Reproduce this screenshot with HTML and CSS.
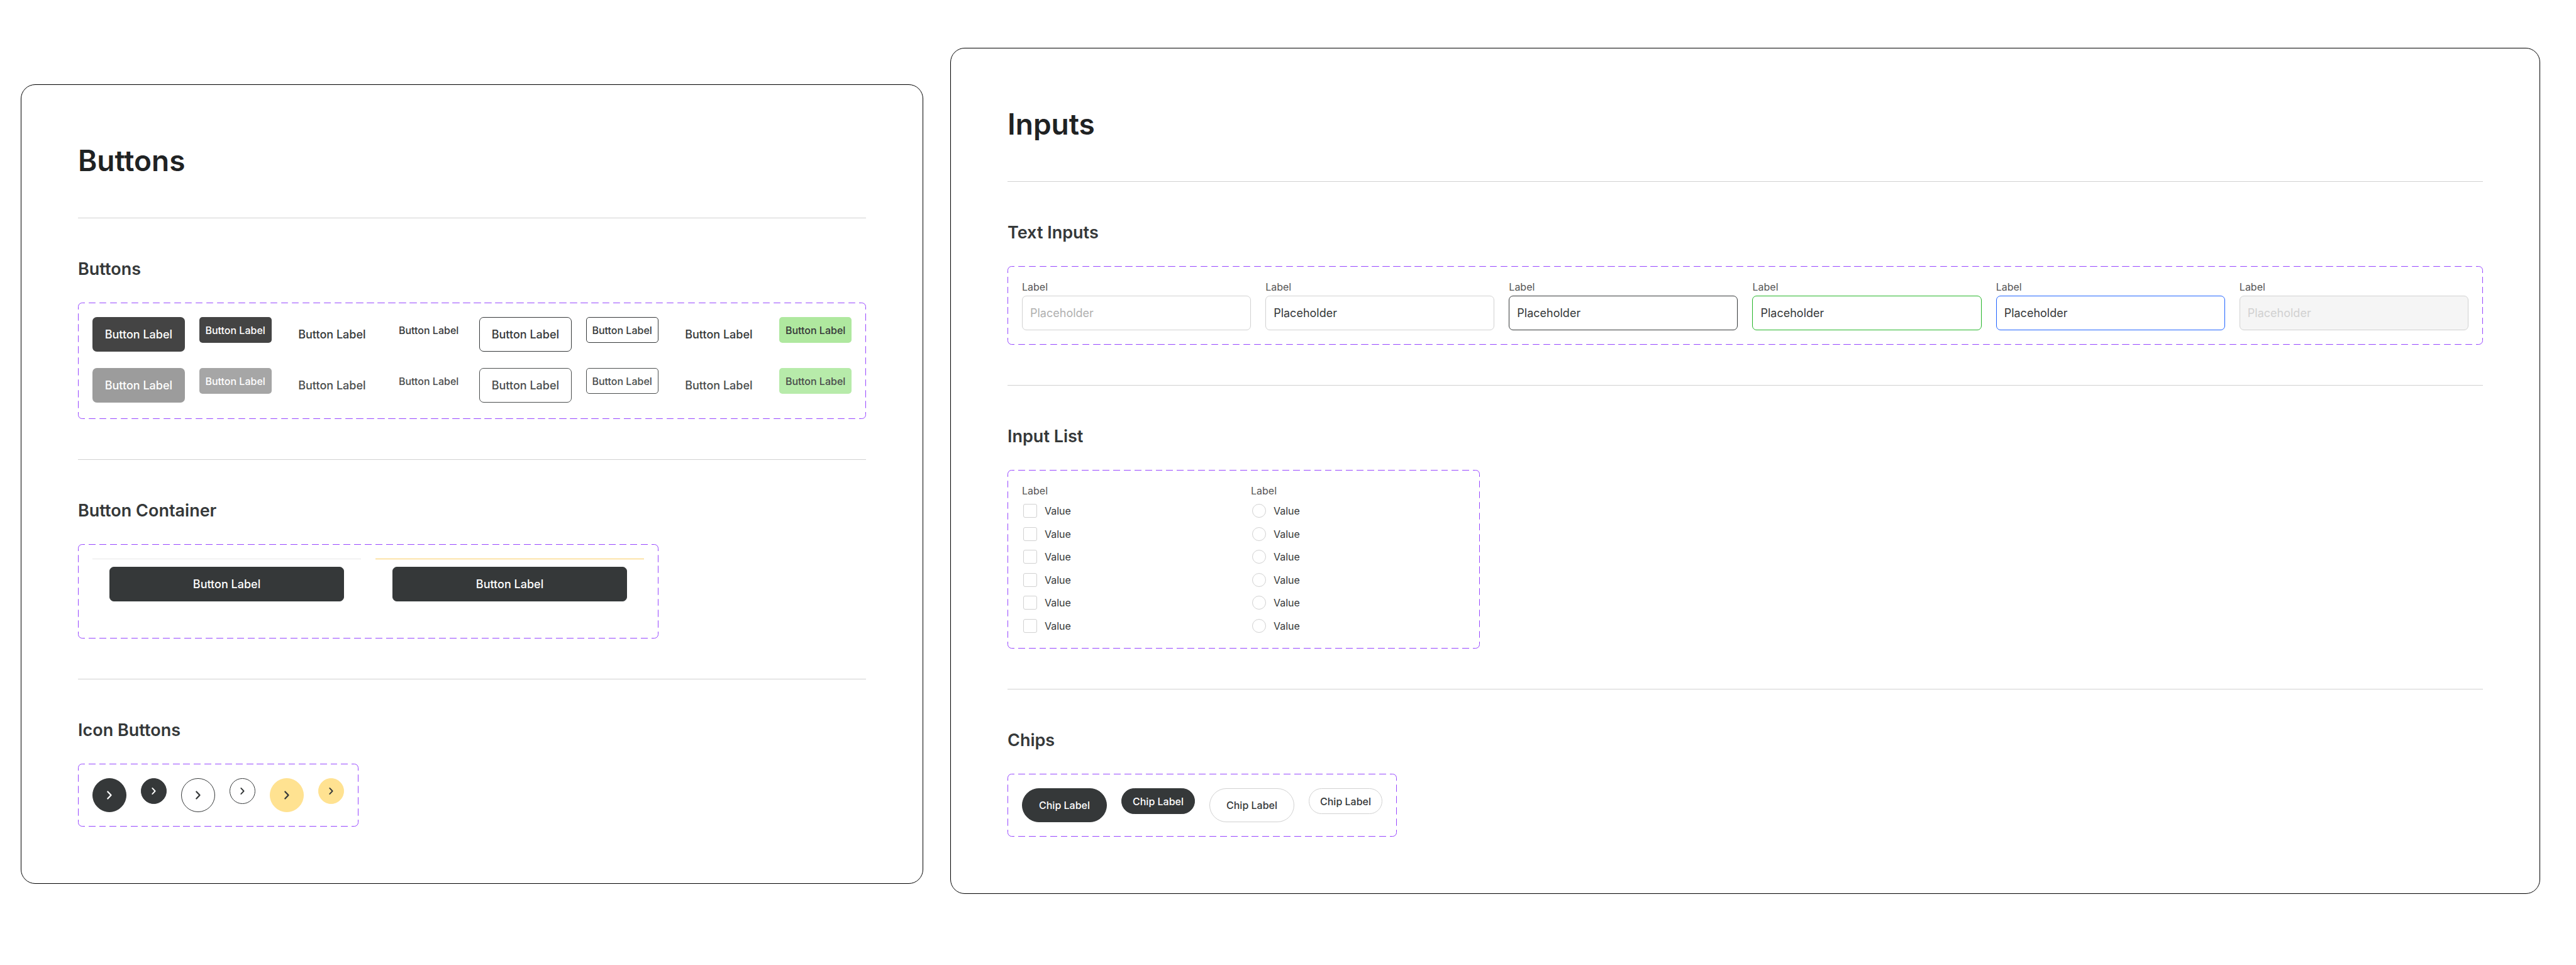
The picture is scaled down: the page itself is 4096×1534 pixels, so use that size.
FILE: index.html
```html
<!DOCTYPE html>
<html lang="en">
<head>
<meta charset="utf-8">
<meta name="viewport" content="width=device-width, initial-scale=1">
<title>Buttons and Inputs</title>
<link rel="stylesheet" href="styles.css">
</head>
<body>
<svg class="sprite" aria-hidden="true">
  <symbol id="chevron" viewBox="0 0 24 24"><path d="M8.400 4.600 15.400 12l-7 7.400" fill="none" stroke="currentColor" stroke-width="3" stroke-linecap="round" stroke-linejoin="round"/></symbol>
</svg>
<main class="board">
  <article class="sheet sheet-buttons">
    <h1 class="title">Buttons</h1>
    <section class="section">
      <h2 class="heading">Buttons</h2>
      <div class="set button-grid">
        <button class="btn primary">Button Label</button>
        <button class="btn small primary">Button Label</button>
        <button class="btn">Button Label</button>
        <button class="btn small">Button Label</button>
        <button class="btn outline">Button Label</button>
        <button class="btn small outline">Button Label</button>
        <button class="btn">Button Label</button>
        <button class="btn small success">Button Label</button>
        <button class="btn primary" disabled>Button Label</button>
        <button class="btn small primary" disabled>Button Label</button>
        <button class="btn" disabled>Button Label</button>
        <button class="btn small" disabled>Button Label</button>
        <button class="btn outline" disabled>Button Label</button>
        <button class="btn small outline" disabled>Button Label</button>
        <button class="btn" disabled>Button Label</button>
        <button class="btn small success" disabled>Button Label</button>
      </div>
    </section>
    <section class="section">
      <h2 class="heading">Button Container</h2>
      <div class="set row">
        <div class="panel"><button class="btn dark">Button Label</button></div>
        <div class="panel highlight"><button class="btn dark">Button Label</button></div>
      </div>
    </section>
    <section class="section">
      <h2 class="heading">Icon Buttons</h2>
      <div class="set row">
        <button class="icon-btn dark" aria-label="Next"><svg class="icon"><use href="#chevron"/></svg></button>
        <button class="icon-btn mini dark" aria-label="Next"><svg class="icon"><use href="#chevron"/></svg></button>
        <button class="icon-btn outline" aria-label="Next"><svg class="icon"><use href="#chevron"/></svg></button>
        <button class="icon-btn mini outline" aria-label="Next"><svg class="icon"><use href="#chevron"/></svg></button>
        <button class="icon-btn accent" aria-label="Next"><svg class="icon"><use href="#chevron"/></svg></button>
        <button class="icon-btn mini accent" aria-label="Next"><svg class="icon"><use href="#chevron"/></svg></button>
      </div>
    </section>
  </article>

  <article class="sheet">
    <h1 class="title">Inputs</h1>
    <section class="section">
      <h2 class="heading">Text Inputs</h2>
      <div class="set field-grid">
        <div class="field"><label class="label" for="t1">Label</label><input class="input" id="t1" type="text" placeholder="Placeholder"></div>
        <div class="field"><label class="label" for="t2">Label</label><input class="input" id="t2" type="text" value="Placeholder"></div>
        <div class="field"><label class="label" for="t3">Label</label><input class="input active" id="t3" type="text" value="Placeholder"></div>
        <div class="field"><label class="label" for="t4">Label</label><input class="input valid" id="t4" type="text" value="Placeholder"></div>
        <div class="field"><label class="label" for="t5">Label</label><input class="input focused" id="t5" type="text" value="Placeholder"></div>
        <div class="field"><label class="label" for="t6">Label</label><input class="input" id="t6" type="text" placeholder="Placeholder" disabled></div>
      </div>
    </section>
    <section class="section">
      <h2 class="heading">Input List</h2>
      <div class="set row list-set">
        <fieldset class="choices">
          <legend class="label">Label</legend>
          <div class="options">
            <label class="option"><input class="check" type="checkbox">Value</label>
            <label class="option"><input class="check" type="checkbox">Value</label>
            <label class="option"><input class="check" type="checkbox">Value</label>
            <label class="option"><input class="check" type="checkbox">Value</label>
            <label class="option"><input class="check" type="checkbox">Value</label>
            <label class="option"><input class="check" type="checkbox">Value</label>
          </div>
        </fieldset>
        <fieldset class="choices">
          <legend class="label">Label</legend>
          <div class="options">
            <label class="option"><input class="check" type="radio" name="value">Value</label>
            <label class="option"><input class="check" type="radio" name="value">Value</label>
            <label class="option"><input class="check" type="radio" name="value">Value</label>
            <label class="option"><input class="check" type="radio" name="value">Value</label>
            <label class="option"><input class="check" type="radio" name="value">Value</label>
            <label class="option"><input class="check" type="radio" name="value">Value</label>
          </div>
        </fieldset>
      </div>
    </section>
    <section class="section">
      <h2 class="heading">Chips</h2>
      <div class="set row">
        <button class="chip dark">Chip Label</button>
        <button class="chip compact dark">Chip Label</button>
        <button class="chip">Chip Label</button>
        <button class="chip compact">Chip Label</button>
      </div>
    </section>
  </article>
</main>
</body>
</html>
```
FILE: styles.css
```css
:root {
  --ink: #353839;
  --line: #d1d1d1;
}

* { box-sizing: border-box; }

body {
  margin: 0;
  background: #fff;
  color: var(--ink);
  font-family: Inter, "Liberation Sans", sans-serif;
  font-optical-sizing: none;
}

button, input { font: inherit; font-optical-sizing: none; color: inherit; }

button { cursor: pointer; }

.sprite { display: none; }

.board {
  display: grid;
  grid-template-columns: 1435fr 2528fr;
  align-items: start;
  gap: 43px;
  padding: 76px 57px 114px 33px;
}

.sheet {
  min-width: 0;
  padding: 90px;
  border: 1px solid #000;
  border-radius: 23px;
}

.sheet-buttons { margin-top: 58px; }

.title {
  margin: 0 0 61px;
  color: #1f2223;
  font-size: 46px;
  line-height: 60px;
  font-weight: 600;
}

.section {
  padding-top: 63px;
  border-top: 1px solid var(--line);
}

.section + .section { margin-top: 64px; }

.heading {
  margin: 0 0 35px;
  font-size: 27px;
  line-height: 36px;
  font-weight: 600;
}

/* Dashed frame: the edge tile repeats a whole number of times on each side */
.set {
  padding: 22px;
  border: 1px solid transparent;
  border-image: url("data:image/svg+xml,%3Csvg xmlns='http://www.w3.org/2000/svg' width='45' height='45'%3E%3Cg fill='none' stroke='%239747ff'%3E%3Cpath d='M11 .5H6.500a6 6 0 0 0-6 6V11M34 .5h4.500a6 6 0 0 1 6 6V11M11 44.500H6.500a6 6 0 0 1-6-6V34M34 44.500h4.500a6 6 0 0 0 6-6V34M17 .5h11M17 44.500h11M.5 17v11M44.500 17v11'/%3E%3C/g%3E%3C/svg%3E") 14 / 14px round;
}

.row {
  display: flex;
  align-items: flex-start;
  gap: 23px;
  width: fit-content;
}

.button-grid {
  display: grid;
  grid-template-columns: repeat(4, 147fr 115fr);
  align-items: start;
  gap: 26px 23px;
  padding-bottom: 25px;
}

.btn {
  width: 100%;
  height: 55px;
  padding: 0;
  border: 1px solid transparent;
  border-radius: 7px;
  background: none;
  font-size: 18px;
  line-height: 24px;
  font-weight: 500;
  white-space: nowrap;
}

.btn.small {
  height: 41px;
  border-radius: 5px;
  font-size: 16px;
}

.btn:disabled { color: #4a4d4d; }
.btn.primary { background: #444; color: #fff; }
.btn.primary:disabled { background: #9c9c9c; }
.btn.small.primary:disabled { background: #a6a6a6; }
.btn.outline { border-color: currentColor; }
.btn.success { background: #afe89f; }
.btn.success:disabled { background: #b7ebaa; }

.dark,
.btn.dark {
  border-color: var(--ink);
  background: var(--ink);
  color: #fff;
}

.panel {
  width: 427px;
  padding: 12px 27px 36px;
  border-top: 1px solid #e8e8e8;
}

.panel.highlight { border-color: #facc5f; }

.panel .btn { display: block; }

.icon-btn {
  display: grid;
  place-items: center;
  width: 54px;
  height: 54px;
  padding: 0;
  border: 1px solid transparent;
  border-radius: 50%;
  background: none;
}

.icon-btn.mini { width: 41px; height: 41px; }
.icon-btn.dark { border-color: var(--ink); background: var(--ink); }
.icon-btn.outline { border-color: var(--ink); }
.icon-btn.accent { border-color: #ffe291; background: #ffe291; }

.icon { width: 18px; height: 18px; }
.mini .icon { width: 15px; height: 15px; }

.field-grid {
  display: grid;
  grid-template-columns: repeat(6, minmax(0, 1fr));
  gap: 23px;
}

.field { display: grid; gap: 4px; }

.label {
  padding: 0;
  color: #555;
  font-size: 16px;
  line-height: 20px;
}

.input {
  width: 100%;
  height: 55px;
  padding: 0 12px;
  border: 1px solid var(--line);
  border-radius: 7px;
  background: #fff;
  font-size: 18px;
}

.input::placeholder { color: #b0b0b0; opacity: 1; }
.input.active { border-color: var(--ink); }
.input.valid { border-color: #24b527; }
.input.focused { border-color: #1f62ff; }
.input:disabled { background: #f5f5f5; }
.input:disabled::placeholder { color: var(--line); }

.list-set { padding-bottom: 17px; }

.choices {
  width: 341px;
  margin: 0;
  padding: 0;
  border: 0;
}

.options {
  display: grid;
  grid-auto-rows: 1fr;
  height: 219px;
  margin-top: 4px;
}

.option {
  display: flex;
  align-items: center;
  gap: 12px;
  padding-left: 2px;
  font-size: 16px;
}

.check {
  appearance: none;
  width: 22px;
  height: 22px;
  margin: 0;
  border: 1px solid var(--line);
  border-radius: 3px;
}

.check[type="radio"] { border-radius: 50%; }

.chip {
  height: 54px;
  padding: 0 26px;
  border: 1px solid var(--line);
  border-radius: 27px;
  background: none;
  font-size: 16px;
  font-weight: 500;
}

.chip.compact { height: 41px; padding: 0 17px; }
.chip.dark { border-color: var(--ink); background: var(--ink); }
```
